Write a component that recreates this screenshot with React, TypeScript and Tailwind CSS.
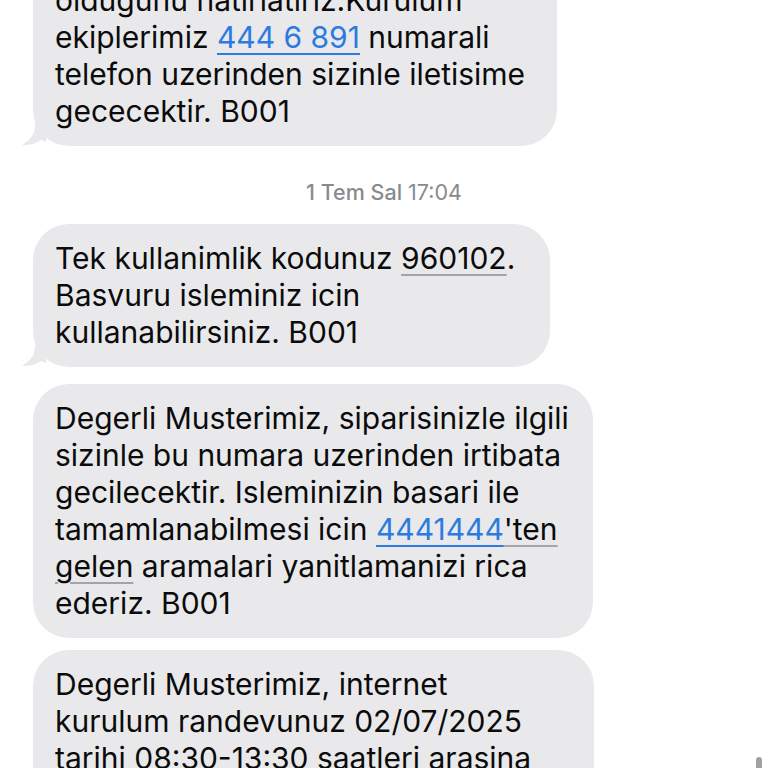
const Tail = () => (
  <svg
    className="absolute -left-[11px] bottom-0 h-[22px] w-[24px]"
    viewBox="0 0 24 22"
    fill="#e9e9eb"
  >
    <path d="M13 0 C13 9 10 15 0 21 C7 21.5 14 20 19 16 L24 18 L24 0 Z" />
  </svg>
)

type BubbleProps = {
  width: string
  tail?: boolean
  className?: string
  children: React.ReactNode
}

const Bubble = ({ width, tail, className, children }: BubbleProps) => (
  <div className={`relative ${width} ${className ?? ""}`}>
    <div className="relative z-10 rounded-[36px] bg-[#e9e9eb] pl-[22px] pr-4 py-[16px] text-[30px] leading-[37px] text-[#0b0b0b] whitespace-nowrap">
      {children}
    </div>
    {tail && <Tail />}
  </div>
)

const Link = ({ children }: { children: React.ReactNode }) => (
  <span className="text-[#2b7be0] underline decoration-[1.5px] underline-offset-[5px]">
    {children}
  </span>
)

const Soft = ({ children }: { children: React.ReactNode }) => (
  <span className="underline decoration-[#a3a3a8] decoration-[1.5px] underline-offset-[5px]">
    {children}
  </span>
)

export default function App() {
  return (
    <div
      className="relative h-[768px] w-[768px] overflow-hidden bg-white"
      style={{ fontFamily: "Inter, 'Noto Sans', sans-serif" }}
    >
      <div className="flex flex-col items-start pl-[33px] -mt-[34px]">
        {/* first message, cut at the top */}
        <Bubble width="w-[524px]" tail>
          oldugunu hatirlatiriz.Kurulum
          <br />
          ekiplerimiz <Link>444 6 891</Link> numarali
          <br />
          telefon uzerinden sizinle iletisime
          <br />
          gecece­ktir. B001
        </Bubble>

        <div className="mt-[34px] mb-[20px] w-[702px] text-center text-[21.5px] leading-[24px] text-[#8a8a8e]">
          <span className="font-medium">1 Tem Sal</span> 17:04
        </div>

        <Bubble width="w-[517px]" tail>
          Tek kullanimlik kodunuz <Soft>960102</Soft>.
          <br />
          Basvuru isleminiz icin
          <br />
          kullanabilirsiniz. B001
        </Bubble>

        <Bubble width="w-[560px]" className="mt-[17px]">
          Degerli Musterimiz, siparisinizle ilgili
          <br />
          sizinle bu numara uzerinden irtibata
          <br />
          gecilecektir. Isleminizin basari ile
          <br />
          tamamlanabilmesi icin <Link>4441444</Link>
          <Soft>'ten</Soft>
          <br />
          <Soft>gelen</Soft> aramalari yanitlamanizi rica
          <br />
          ederiz. B001
        </Bubble>

        <Bubble width="w-[561px]" className="mt-[12px]">
          Degerli Musterimiz, internet
          <br />
          kurulum randevunuz 02/07/2025
          <br />
          tarihi 08:30-13:30 saatleri arasina
          <br />
          gerceklestirilecektir.
        </Bubble>
      </div>

      {/* scroll indicator */}
      <div className="absolute right-[6px] top-[757px] h-[20px] w-[6px] rounded-full bg-[#a2a2a6]" />
    </div>
  )
}
